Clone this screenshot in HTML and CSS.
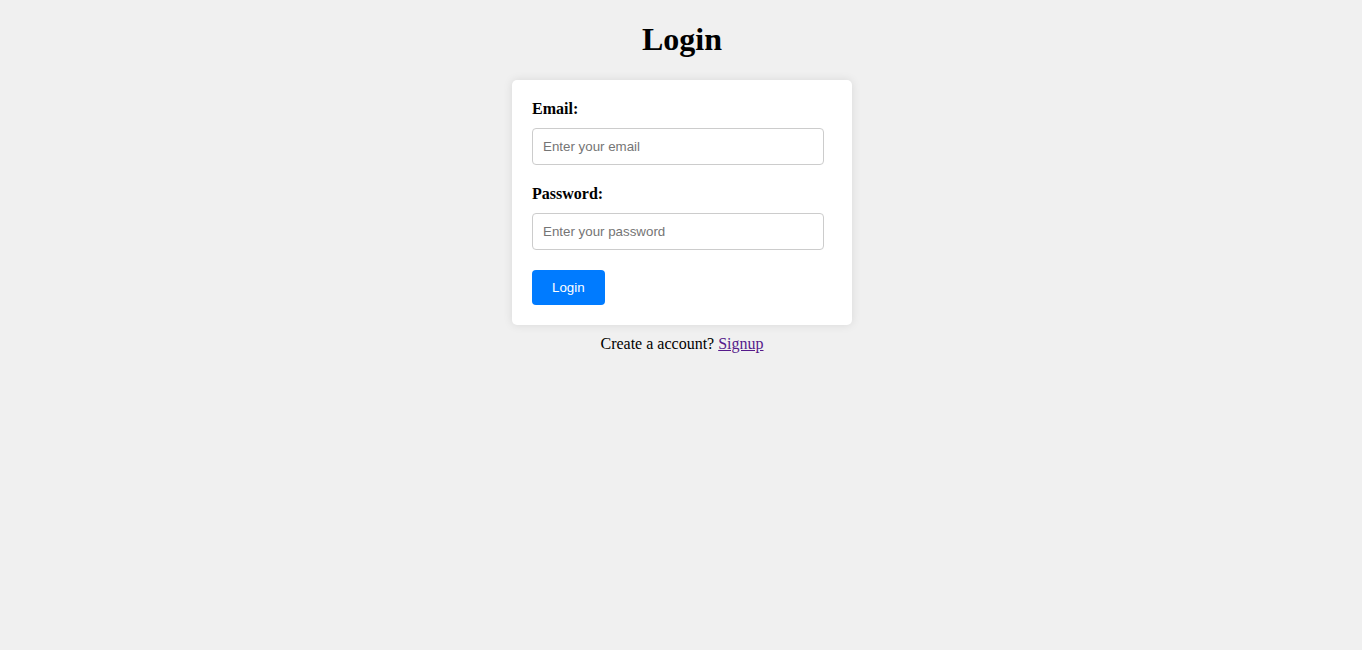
FILE: index.html
```html
<!DOCTYPE html>
<html lang="en">
<head>
<meta charset="utf-8">
<title>Login</title>
<link rel="stylesheet" href="styles.css">
</head>
<body>
<main class="page">
  <h1 class="title">Login</h1>
  <form class="card">
    <label class="label" for="email">Email:</label>
    <input class="field" id="email" type="email" placeholder="Enter your email">
    <label class="label" for="password">Password:</label>
    <input class="field" id="password" type="password" placeholder="Enter your password">
    <button class="btn" type="button">Login</button>
  </form>
  <p class="footer">Create a account? <a class="link" href="#">Signup</a></p>
</main>
</body>
</html>
```
FILE: styles.css
```css
html, body {
  margin: 0;
  padding: 0;
}
body {
  background: #f0f0f0;
  font-family: "Liberation Serif", "Times New Roman", serif;
  font-size: 16px;
  color: #000;
}
.page {
  display: flex;
  flex-direction: column;
  align-items: center;
  padding-left: 2px;
}
.title {
  font-size: 32px;
  font-weight: bold;
  margin: 21.44px 0;
}
.card {
  box-sizing: border-box;
  width: 340px;
  padding: 20px;
  background: #fff;
  border-radius: 5px;
  box-shadow: 0 0 10px rgba(0, 0, 0, 0.1);
  display: flex;
  flex-direction: column;
  align-items: flex-start;
}
.label {
  font-weight: bold;
  margin-bottom: 10px;
}
.field {
  box-sizing: content-box;
  width: 270px;
  padding: 10px;
  margin: 0 0 20px 0;
  border: 1px solid #ccc;
  border-radius: 4px;
  font-family: "Liberation Sans", Arial, sans-serif;
  font-size: 13.333px;
  line-height: 15px;
  color: #000;
  background: #fff;
  outline: none;
}
.field::placeholder {
  color: #757575;
}
.btn {
  padding: 10px 20px;
  border: none;
  border-radius: 4px;
  background: #007bff;
  color: #fff;
  font-family: "Liberation Sans", Arial, sans-serif;
  font-size: 13.333px;
  line-height: 15px;
  cursor: pointer;
}
.footer {
  margin: 10px 0;
}
.link {
  color: #551a8b;
}
```
